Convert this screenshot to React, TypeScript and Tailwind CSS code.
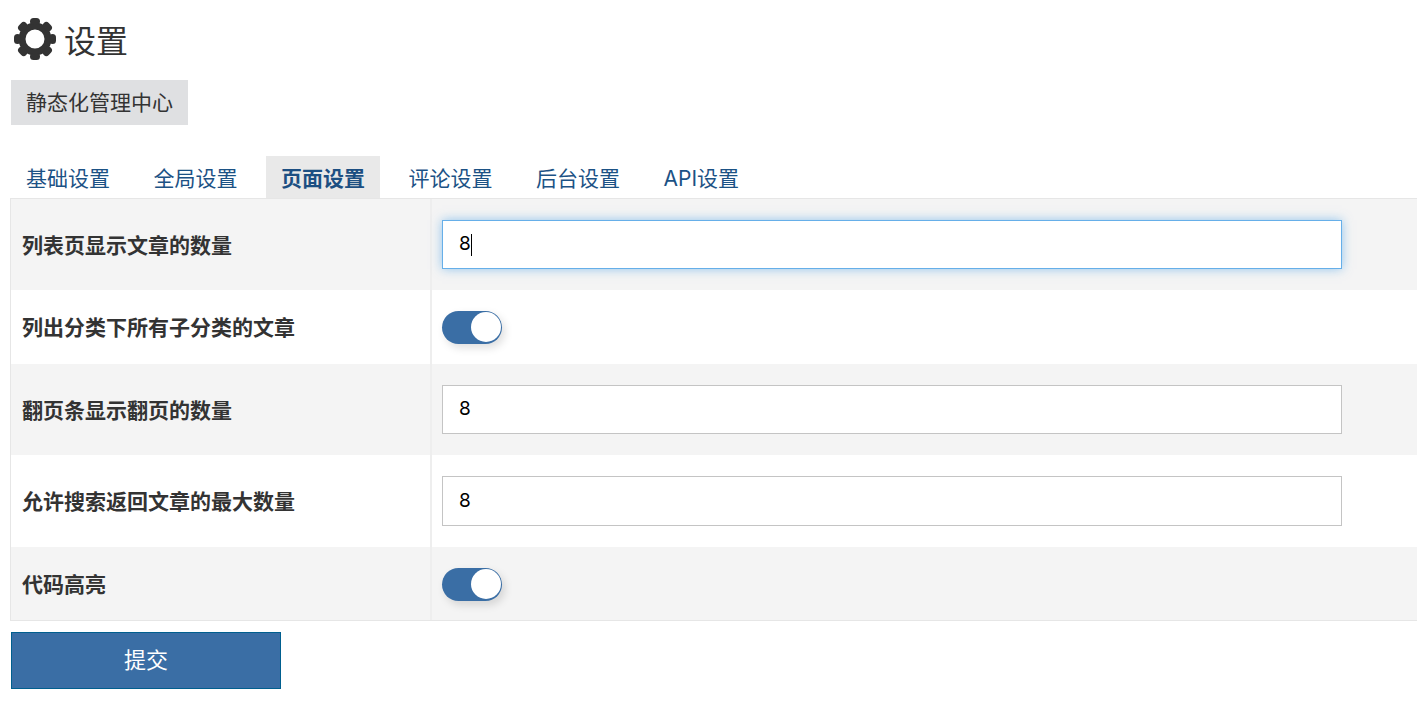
const fontCls = "font-['Inter','Noto_Sans_CJK_SC',sans-serif]"

const tabs = ['基础设置', '全局设置', '页面设置', '评论设置', '后台设置', 'API设置']

const GearIcon = () => (
  <svg width="42" height="42" viewBox="0 0 42 42" fill="#333333">
    <path
      fillRule="evenodd"
      d="M21 11.5a9.5 9.5 0 1 0 0 19 9.5 9.5 0 0 0 0-19zM21 4.5a16.5 16.5 0 1 1 0 33 16.5 16.5 0 0 1 0-33z"
    />
    {[0, 45, 90, 135, 180, 225, 270, 315].map(a => (
      <rect key={a} x="16" y="0" width="10" height="7" rx="3.5" transform={`rotate(${a} 21 21)`} />
    ))}
  </svg>
)

const Toggle = () => (
  <div className="relative h-[33px] w-[60px] rounded-full bg-[#3a6ea5] shadow-[3px_4px_8px_rgba(0,0,0,0.13)]">
    <div className="absolute right-[1px] top-[1.5px] h-[30px] w-[30px] rounded-full bg-white" />
  </div>
)

const Field = ({ focused, tall }: { focused?: boolean; tall?: boolean }) => (
  <div
    className={
      (tall ? 'h-[50px] ' : 'h-[49px] ') +
      (focused
        ? 'flex w-[900px] items-center border border-[#66afe9] bg-white pl-[16px] text-[19px] text-black shadow-[0_0_10px_rgba(102,175,233,0.7)]'
        : 'flex w-[900px] items-center border border-[#c4c4c4] bg-white pl-[16px] text-[19px] text-black')
    }
  >
    8{focused ? <span className="h-[22px] w-px bg-black" /> : null}
  </div>
)

const Row = ({ label, alt, h, children }: { label: string; alt?: boolean; h: string; children: React.ReactNode }) => (
  <div className={`flex ${h} ${alt ? 'bg-[#f4f4f4]' : 'bg-white'}`}>
    <div className="flex w-[421px] shrink-0 items-center border-r-2 border-[#eeeeee] pl-[11px] pt-[2px] text-[21px] font-bold text-[#333333]">
      {label}
    </div>
    <div className="flex items-center pl-[10px]">{children}</div>
  </div>
)

export default function App() {
  return (
    <div className={`h-[720px] w-[1417px] overflow-hidden bg-white ${fontCls}`}>
      <div className="flex h-[80px] items-start pl-[14px] pt-[18px] text-[#333333]">
        <GearIcon />
        <span className="ml-[8px] pt-[1px] text-[32px] leading-[46px]">设置</span>
      </div>
      <div className="pl-[11px]">
        <div className="flex h-[45px] w-[177px] items-center justify-center bg-[#dfe0e2] pt-[1px] text-[21px] text-[#333333]">
          静态化管理中心
        </div>
      </div>
      <div className="mt-[31px] flex h-[42px] gap-[13.5px] pl-[11px]">
        {tabs.map(t => (
          <div
            key={t}
            className={
              t === '页面设置'
                ? 'flex items-center bg-[#e9e9e9] px-[15px] pt-[3px] text-[21px] font-bold text-[#1c4f82]'
                : 'flex items-center px-[15px] pt-[3px] text-[21px] text-[#1c5285]'
            }
          >
            {t}
          </div>
        ))}
      </div>
      <div className="ml-[10px] w-[1420px] border border-[#e6e6e6]">
        <Row label="列表页显示文章的数量" alt h="h-[91px]">
          <Field focused />
        </Row>
        <Row label="列出分类下所有子分类的文章" h="h-[74px]">
          <Toggle />
        </Row>
        <Row label="翻页条显示翻页的数量" alt h="h-[91px]">
          <Field />
        </Row>
        <Row label="允许搜索返回文章的最大数量" h="h-[92px]">
          <Field tall />
        </Row>
        <Row label="代码高亮" alt h="h-[73px]">
          <div className="pt-[1px]">
            <Toggle />
          </div>
        </Row>
      </div>
      <div className="mt-[11px] pl-[11px]">
        <button
          type="button"
          className="h-[57px] w-[270px] border border-[#005f8f] bg-[#3a6ea5] text-[22px] text-white"
        >
          提交
        </button>
      </div>
    </div>
  )
}
